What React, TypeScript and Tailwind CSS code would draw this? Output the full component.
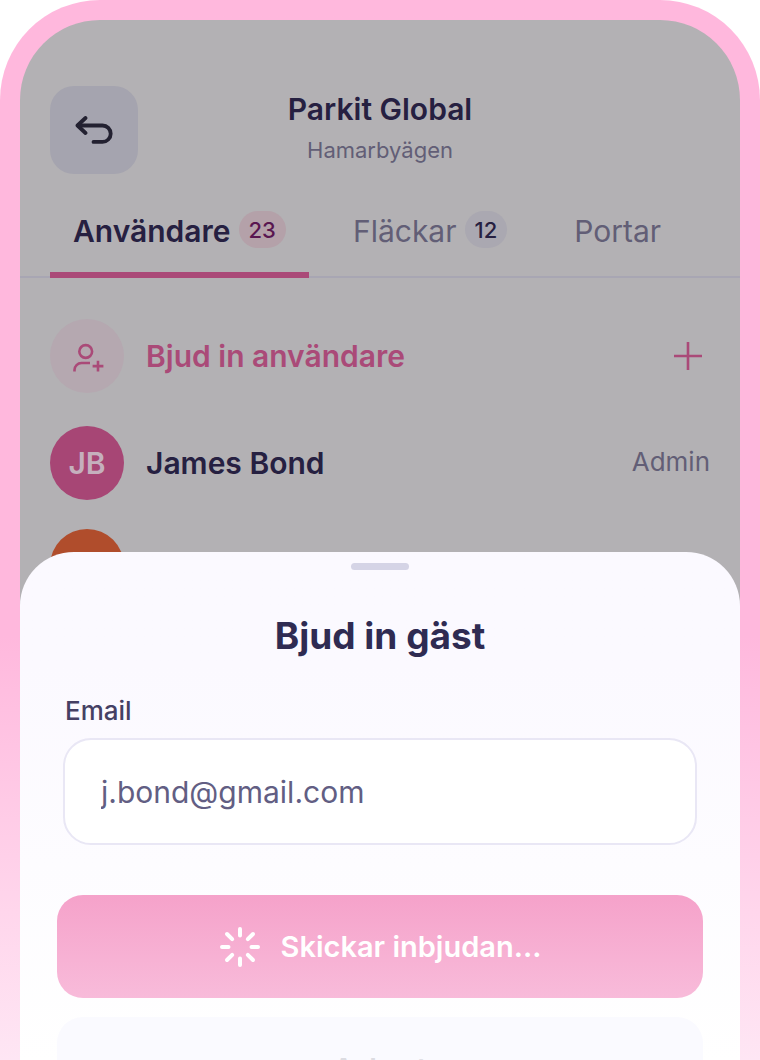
const tabs = [
  { label: "Användare", count: 23 },
  { label: "Fläckar", count: 12 },
  { label: "Portar" },
];

function BackIcon() {
  return (
    <svg viewBox="0 0 38 28" className="w-[38px] h-7" fill="none" stroke="#232131" strokeWidth="3.8" strokeLinecap="round" strokeLinejoin="round" aria-hidden="true">
      <path d="M10.5 2L2.5 9.5L10.5 17" />
      <path d="M3 9.5H27.5a8.2 8.2 0 0 1 0 16.4H18.5" />
    </svg>
  );
}

function UserPlusIcon() {
  return (
    <svg viewBox="0 0 34 32" className="w-[34px] h-8" fill="none" stroke="#aa4a78" strokeWidth="2.6" aria-hidden="true">
      <circle cx="15.7" cy="11.5" r="6.4" />
      <path d="M4.5 31.5v-1.5a7 7 0 0 1 7-7h8.5" />
      <path d="M28 20.7v10.8M22.6 26.1h10.8" />
    </svg>
  );
}

function PlusIcon() {
  return (
    <svg viewBox="0 0 30 30" className="w-[30px] h-[30px]" fill="none" stroke="#aa4a78" strokeWidth="2.6" aria-hidden="true">
      <path d="M15 1v28M1 15h28" />
    </svg>
  );
}

function Spinner() {
  return (
    <svg viewBox="0 0 42 42" className="w-[42px] h-[42px]" fill="none" stroke="#ffffff" strokeWidth="4" strokeLinecap="round" aria-hidden="true">
      <path d="M21 3v6.5M21 32.5V39M3 21h6.5M32.500 21H39" />
      <path d="M8 8l5.2 5.2M28.8 13.2L34 8M8 34l5.2-5.2M28.8 28.8L34 34" />
    </svg>
  );
}

function Header() {
  return (
    <header className="grid grid-cols-[88px_1fr_88px] px-[30px] pt-[66px]">
      <button type="button" aria-label="Tillbaka" className="flex h-[88px] items-center justify-center rounded-3xl bg-[#a5a4af]">
        <BackIcon />
      </button>
      <div className="pt-[3px] text-center">
        <h1 className="text-[30px] leading-10 font-semibold text-[#262041]">Parkit Global</h1>
        <p className="text-[22px] leading-[42px] text-[#625e76]">Hamarbyägen</p>
      </div>
    </header>
  );
}

function Tabs() {
  return (
    <nav className="mt-[26px] flex border-b-2 border-[#a8a6b3] pl-[30px]">
      {tabs.map((tab, i) => (
        <button
          key={tab.label}
          type="button"
          className={`mr-[21px] -mb-0.5 flex h-[78px] items-start gap-2 border-b-[6px] px-[23px] pt-[11px] text-[30px] leading-10 ${
            i === 0 ? "border-[#aa4a78] font-semibold text-[#262041]" : "border-transparent text-[#625e76]"
          }`}
        >
          {tab.label}
          {tab.count && (
            <span
              className={`flex h-[37px] items-center rounded-full px-2.5 text-[22px] font-medium ${
                i === 0 ? "bg-[#b4a1a9] text-[#591650]" : "bg-[#aaa8b1] text-[#262041]"
              }`}
            >
              {tab.count}
            </span>
          )}
        </button>
      ))}
    </nav>
  );
}

function UserList() {
  return (
    <ul className="px-[30px] pt-[41px] text-[30px] font-semibold">
      <li>
        <button type="button" className="flex w-full items-center gap-[22px] text-[#aa4a78]">
          <span className="flex h-[74px] w-[74px] items-center justify-center rounded-full bg-[#b5a8b0]">
            <UserPlusIcon />
          </span>
          <span>Bjud in användare</span>
          <span className="mr-[7px] ml-auto">
            <PlusIcon />
          </span>
        </button>
      </li>
      <li className="mt-[33px] flex items-center gap-[22px] text-[#262041]">
        <span className="flex h-[74px] w-[74px] items-center justify-center rounded-full bg-[#a74675] text-[#c5b0bd]">JB</span>
        <span>James Bond</span>
        <span className="ml-auto pb-1 text-[26px] font-normal text-[#625e76]">Admin</span>
      </li>
      <li className="mt-[29px]">
        <span className="block h-[74px] w-[74px] rounded-full bg-[#b04d2c]" />
      </li>
    </ul>
  );
}

function InviteSheet() {
  return (
    <form
      role="dialog"
      aria-labelledby="invite-title"
      className="relative -mt-[51px] grow rounded-t-[54px] bg-linear-to-b from-[#fbf9ff] from-20% to-white to-90% px-[37px] pt-[11px]"
    >
      <div className="mx-auto h-[7px] w-[58px] rounded-full bg-[#d5d4e6]" />
      <h2 id="invite-title" className="mt-[42px] text-center text-[37px] leading-[48px] font-bold text-[#2f2b52]">
        Bjud in gäst
      </h2>
      <div className="mt-[35px] px-1.5">
        <label htmlFor="email" className="block px-0.5 text-[26px] leading-8 font-medium text-[#454064]">
          Email
        </label>
        <input
          id="email"
          type="email"
          defaultValue="j.bond@gmail.com"
          className="mt-[11px] block h-[107px] w-full rounded-[28px] border-2 border-[#e9e7f5] bg-white px-9 text-[30px] text-[#625e83] outline-none"
        />
      </div>
      <button
        type="submit"
        className="mt-[50px] flex h-[103px] w-full items-center justify-center gap-5 rounded-[26px] bg-linear-to-b from-[#f5a2ca] to-[#f8bbda] text-[29px] font-semibold text-white"
      >
        <Spinner />
        Skickar inbjudan...
      </button>
      <button
        type="button"
        className="mt-[19px] h-[103px] w-full rounded-[26px] bg-[#fafaff] text-[29px] font-semibold text-[#dcdce2]"
      >
        Avbryt
      </button>
    </form>
  );
}

export default function App() {
  return (
    <div className="h-screen overflow-hidden rounded-t-[100px] bg-linear-to-b from-[#ffb8dd] from-60% to-[#fee6f4] px-5 pt-5 font-['Inter',sans-serif]">
      <main className="flex min-h-full flex-col overflow-hidden rounded-t-[80px] bg-[#b3b1b4]">
        <Header />
        <Tabs />
        <UserList />
        <InviteSheet />
      </main>
    </div>
  );
}
